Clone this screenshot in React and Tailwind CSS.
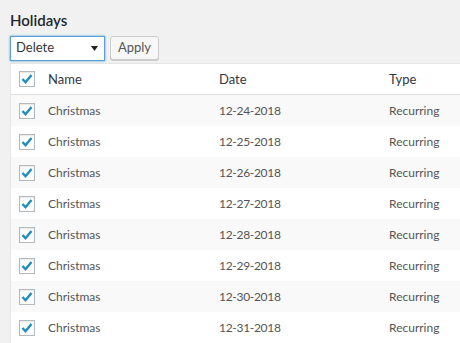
import React from "react";

const rows = [
  "12-24-2018",
  "12-25-2018",
  "12-26-2018",
  "12-27-2018",
  "12-28-2018",
  "12-29-2018",
  "12-30-2018",
  "12-31-2018",
];

function Check() {
  return (
    <div className="w-[16px] h-[16px] border border-[#b4b9be] bg-white shadow-[inset_0_1px_2px_rgba(0,0,0,0.1)] flex items-center justify-center">
      <svg width="14" height="14" viewBox="0 0 14 14">
        <path d="M2.5 7 L5.5 10.2 L11.5 3" fill="none" stroke="#1e8cbe" strokeWidth="2.4" strokeLinejoin="miter" />
      </svg>
    </div>
  );
}

export default function App() {
  return (
    <div className="w-[460px] h-[343px] bg-[#f1f1f1] overflow-hidden pl-[10px] pt-[10px] text-[#555]" style={{ fontFamily: '"Segoe UI", Lato, "Open Sans", sans-serif' }}>
      <h1 className="text-[15px] leading-[20px] font-semibold text-[#23282d]">Holidays</h1>
      <div className="flex items-center gap-[5px] mt-[5px] h-[26px]">
        <div className="w-[95px] h-[25px] bg-white border border-[#5b9dd9] shadow-[0_0_2px_rgba(30,140,190,0.8)] flex items-center justify-between pl-[5px] pr-[6px] text-[13px] text-[#32373c]">
          <span>Delete</span>
          <svg width="7" height="5" viewBox="0 0 7 5"><path d="M0 0 L7 0 L3.5 5 Z" fill="#222" /></svg>
        </div>
        <div className="w-[49px] h-[24px] rounded-[3px] border border-[#ccc] bg-[#f7f7f7] shadow-[0_1px_0_#ccc] flex items-center justify-center text-[13px] text-[#555]">
          Apply
        </div>
      </div>
      <div className="mt-[2px] bg-white border-l border-t border-[#e5e5e5] w-[460px]">
        <div className="flex items-center h-[31px] border-b border-[#e1e1e1] text-[13px] text-[#32373c]">
          <div className="w-[37px] pl-[8px]"><Check /></div>
          <div className="w-[171px] pt-[2px]">Name</div>
          <div className="w-[170px] pt-[2px]">Date</div>
          <div className="pt-[2px]">Type</div>
        </div>
        {rows.map((d, i) => (
          <div key={d} className={`flex items-center h-[31px] text-[12px] ${i % 2 === 0 ? "bg-[#f9f9f9]" : "bg-white"}`}>
            <div className="w-[37px] pl-[8px]"><Check /></div>
            <div className="w-[171px]">Christmas</div>
            <div className="w-[170px] tracking-[-0.3px]">{d}</div>
            <div>Recurring</div>
          </div>
        ))}
      </div>
    </div>
  );
}
